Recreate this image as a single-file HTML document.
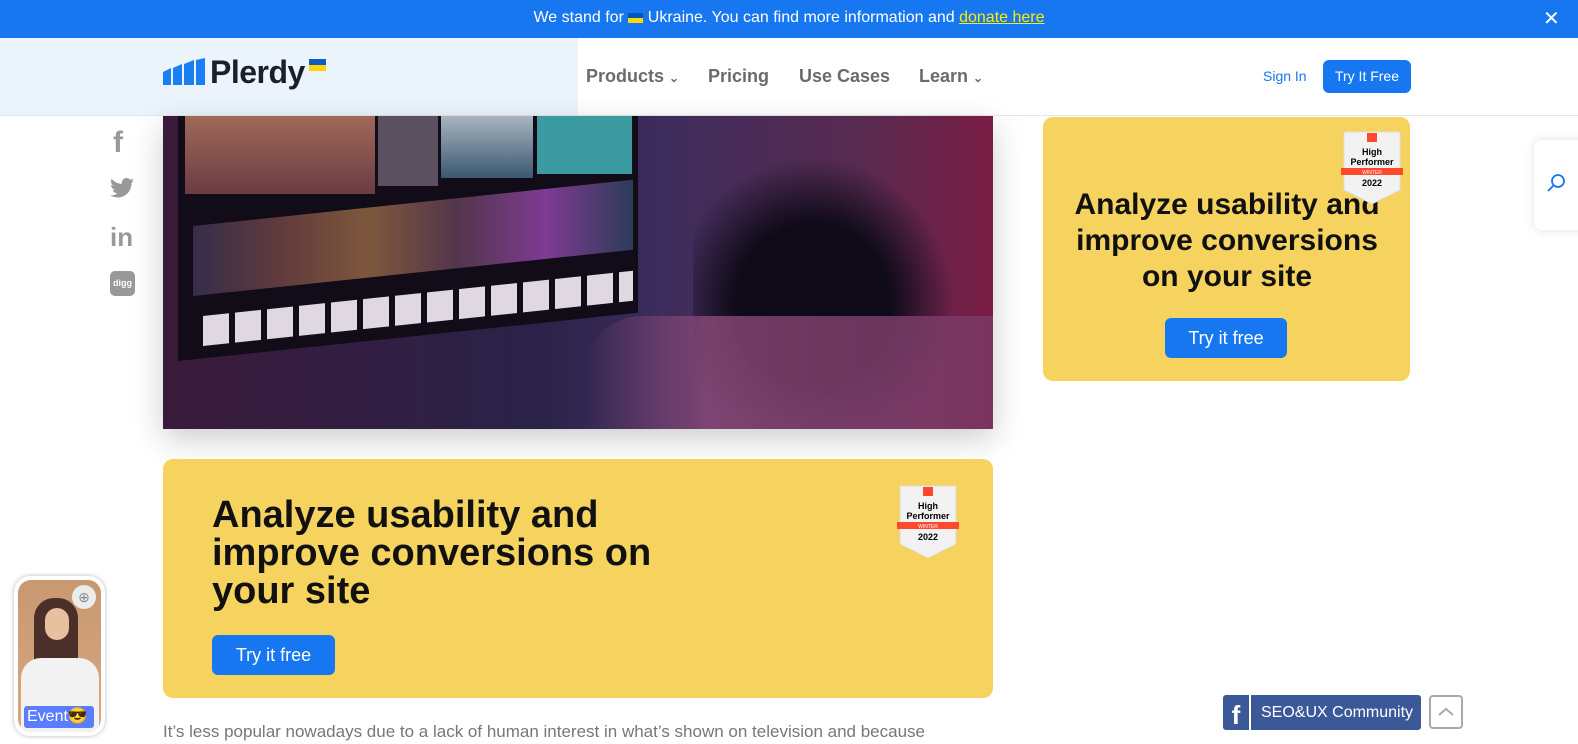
<!DOCTYPE html>
<html><head><meta charset="utf-8"><style>
*{margin:0;padding:0;box-sizing:border-box}
body{width:1578px;height:744px;overflow:hidden;background:#fff;font-family:"Liberation Sans",sans-serif;position:relative}
.top{position:absolute;left:0;top:0;width:1578px;height:38px;background:#1677f0;color:#fff;font-size:16px;text-align:center;line-height:36px}
.top a{color:#ffeb00;text-decoration:underline}
.hdr{position:absolute;top:38px;left:0;width:1578px;height:78px;background:#fff;border-bottom:1px solid #e6e6e6}
.hdrl{position:absolute;left:0;top:0;width:578px;height:77px;background:#ebf3fb}
.nav{position:absolute;top:28px;font-size:18px;font-weight:bold;color:#6b6b6b}
.abs{position:absolute}
.card{position:absolute;background:#f5d35e;border-radius:10px}
.btn{position:absolute;background:#1677f0;color:#fff;border-radius:6px;font-size:18px;text-align:center;line-height:40px}
h2{font-weight:bold;color:#111}
.badge{position:absolute;width:66px;height:76px}
</style></head><body>
<div class="top">We stand for <span style="display:inline-block;width:15px;height:10px;background:linear-gradient(#0057b7 50%,#ffd700 50%);vertical-align:-1px"></span> Ukraine. You can find more information and <a>donate here</a></div>
<div class="abs" style="left:1543px;top:10px;color:#fff;font-size:20px;line-height:18px">✕</div>
<div class="hdr"><div class="hdrl"></div>
<svg class="abs" style="left:163px;top:20px" width="42" height="28" viewBox="0 0 42 28"><path d="M0 14l8-4v17H0z M10 10l9-4v21h-9z M21 6l10-4v25H21z M33 2l9-2v27h-9z" fill="#1a7ef5"/></svg>
<div class="abs" style="left:210px;top:16px;font-size:32px;font-weight:bold;color:#1b1f2a;letter-spacing:-0.5px">Plerdy</div>
<div class="abs" style="left:309px;top:21px;width:17px;height:12px;background:linear-gradient(#0a5fc0 50%,#ffd500 50%)"></div>
<div class="nav" style="left:586px">Products <span style="font-size:12px">&#8964;</span></div>
<div class="nav" style="left:708px">Pricing</div>
<div class="nav" style="left:799px">Use Cases</div>
<div class="nav" style="left:919px">Learn <span style="font-size:12px">&#8964;</span></div>
<div class="abs" style="left:1263px;top:30px;font-size:14px;color:#1677f0">Sign In</div>
<div class="btn" style="left:1323px;top:22px;width:88px;height:33px;line-height:33px;font-size:14px">Try It Free</div>
</div>
<div class="abs" style="left:113px;top:128px;font-size:30px;font-weight:bold;color:#999;line-height:30px">f</div>
<svg class="abs" style="left:110px;top:178px" width="24" height="20" viewBox="0 0 24 20"><path d="M24 2.4a10 10 0 01-2.8.8A5 5 0 0023.3.4a10 10 0 01-3.1 1.2A4.9 4.9 0 0011.8 6 14 14 0 011.7.9a4.9 4.9 0 001.5 6.6 4.9 4.9 0 01-2.2-.6 4.9 4.9 0 003.9 4.9 5 5 0 01-2.2.1 4.9 4.9 0 004.6 3.4A9.9 9.9 0 010 17.3 14 14 0 007.5 19.5c9 0 14-7.5 14-14v-.6A10 10 0 0024 2.4z" fill="#999"/></svg>
<div class="abs" style="left:110px;top:222px;font-size:26px;font-weight:bold;color:#999">in</div>
<div class="abs" style="left:110px;top:271px;width:25px;height:25px;border-radius:5px;background:#999;color:#fff;font-size:9px;font-weight:bold;text-align:center;line-height:25px">digg</div>
<!-- hero image -->
<div class="abs" style="left:163px;top:116px;width:830px;height:313px;overflow:hidden;background:linear-gradient(90deg,#3a1a3a 0%,#2a2248 45%,#3d2c5c 60%,#5a2a50 85%,#7a1d44 100%);box-shadow:0 10px 30px rgba(0,0,0,.2)">
<div class="abs" style="left:15px;top:0;width:460px;height:245px;background:#120c18;transform:skewY(-6deg);transform-origin:0 0"></div>
<div class="abs" style="left:22px;top:0;width:190px;height:78px;background:linear-gradient(#a06858,#6a3c44)"></div>
<div class="abs" style="left:215px;top:0;width:60px;height:70px;background:#5a5060"></div>
<div class="abs" style="left:278px;top:0;width:92px;height:62px;background:linear-gradient(#aab4c0,#3a5870)"></div>
<div class="abs" style="left:374px;top:0;width:95px;height:58px;background:#3a9aa0"></div>
<div class="abs" style="left:30px;top:110px;width:440px;height:70px;background:linear-gradient(90deg,#3a3050,#6a4040,#8a6040,#5a3a50,#8a40a0,#304060);opacity:.9;transform:skewY(-6deg);transform-origin:0 0"></div>
<div class="abs" style="left:40px;top:200px;width:430px;height:30px;background:repeating-linear-gradient(90deg,#e0d8e0 0 26px,transparent 26px 32px);transform:skewY(-6deg);transform-origin:0 100%"></div>
<div class="abs" style="left:530px;top:0;width:300px;height:313px;background:radial-gradient(ellipse at 40% 60%,#0e0a18 0 30%,transparent 55%)"></div>
<div class="abs" style="left:420px;top:200px;width:410px;height:113px;background:linear-gradient(90deg,transparent,#8a4a78 30%,#7a3a66);border-radius:60px 0 0 0;opacity:.8"></div>
</div>
<!-- right card -->
<div class="card" style="left:1043px;top:117px;width:367px;height:264px">
<h2 style="position:absolute;left:24px;top:70px;width:320px;text-align:center;font-size:30px;line-height:36px">Analyze usability and improve conversions on your site</h2>
<div class="btn" style="left:122px;top:201px;width:122px">Try it free</div>
</div>
<svg class="badge" style="left:1339px;top:130px" viewBox="0 0 66 76"><path d="M5 2h56v58L33 74 5 60z" fill="#f2f2f2" stroke="#ddd"/><rect x="28" y="3" width="10" height="9" fill="#ff492c"/><text x="33" y="25" font-size="9" font-weight="bold" text-anchor="middle" font-family="Liberation Sans">High</text><text x="33" y="35" font-size="9" font-weight="bold" text-anchor="middle" font-family="Liberation Sans">Performer</text><rect x="2" y="38" width="62" height="7" fill="#ff492c"/><text x="33" y="44" font-size="5" fill="#fff" text-anchor="middle" font-family="Liberation Sans">WINTER</text><text x="33" y="56" font-size="9" font-weight="bold" text-anchor="middle" font-family="Liberation Sans">2022</text></svg>
<!-- search tab -->
<div class="abs" style="left:1534px;top:140px;width:60px;height:90px;background:#fff;border-radius:8px;box-shadow:0 0 10px rgba(0,0,0,.12)"></div>
<svg class="abs" style="left:1545px;top:172px" width="22" height="22" viewBox="0 0 22 22"><circle cx="13" cy="9" r="6" fill="none" stroke="#1677f0" stroke-width="1.8"/><path d="M9 13l-6 6" stroke="#1677f0" stroke-width="1.8"/></svg>
<!-- main card -->
<div class="card" style="left:163px;top:459px;width:830px;height:239px">
<h2 style="position:absolute;left:49px;top:37px;width:480px;font-size:38px;line-height:38px">Analyze usability and improve conversions on your site</h2>
<div class="btn" style="left:49px;top:176px;width:123px">Try it free</div>
</div>
<svg class="badge" style="left:895px;top:484px" viewBox="0 0 66 76"><path d="M5 2h56v58L33 74 5 60z" fill="#f2f2f2" stroke="#ddd"/><rect x="28" y="3" width="10" height="9" fill="#ff492c"/><text x="33" y="25" font-size="9" font-weight="bold" text-anchor="middle" font-family="Liberation Sans">High</text><text x="33" y="35" font-size="9" font-weight="bold" text-anchor="middle" font-family="Liberation Sans">Performer</text><rect x="2" y="38" width="62" height="7" fill="#ff492c"/><text x="33" y="44" font-size="5" fill="#fff" text-anchor="middle" font-family="Liberation Sans">WINTER</text><text x="33" y="56" font-size="9" font-weight="bold" text-anchor="middle" font-family="Liberation Sans">2022</text></svg>
<div class="abs" style="left:163px;top:722px;font-size:17px;color:#777;white-space:nowrap">It’s less popular nowadays due to a lack of human interest in what’s shown on television and because</div>
<!-- video widget -->
<div class="abs" style="left:14px;top:576px;width:91px;height:160px;border-radius:16px;background:#fff;box-shadow:0 0 4px rgba(0,0,0,.3)"></div>
<div class="abs" style="left:18px;top:580px;width:83px;height:152px;border-radius:13px;overflow:hidden;background:linear-gradient(#c89870,#d8a882)">
<div class="abs" style="left:16px;top:18px;width:44px;height:70px;border-radius:20px 20px 0 0;background:#4a3028"></div>
<div class="abs" style="left:27px;top:28px;width:24px;height:32px;border-radius:12px;background:#e8c0a0"></div>
<div class="abs" style="left:3px;top:78px;width:78px;height:80px;border-radius:20px 20px 0 0;background:#f2f2f2"></div>
<div class="abs" style="left:54px;top:5px;width:24px;height:24px;border-radius:12px;background:#ececec;color:#888;font-size:14px;text-align:center;line-height:24px">⊕</div>
</div>
<div class="abs" style="left:24px;top:706px;width:70px;height:22px;background:#5a7cff;border-radius:3px;color:#fff;font-size:16px;line-height:22px;padding-left:3px">Event😎</div>
<!-- community -->
<div class="abs" style="left:1223px;top:695px;width:26px;height:35px;background:#3b5998;border-radius:3px 0 0 3px;color:#fff;font-weight:bold;font-size:26px;text-align:center;line-height:40px">f</div>
<div class="abs" style="left:1251px;top:695px;width:170px;height:35px;background:#3b5998;border-radius:0 3px 3px 0;color:#fff;font-size:16px;line-height:35px;padding-left:10px">SEO&amp;UX Community</div>
<div class="abs" style="left:1429px;top:695px;width:34px;height:34px;border:2px solid #aaa;border-radius:4px"></div>
<svg class="abs" style="left:1437px;top:706px" width="18" height="10"><path d="M2 9l7-6 7 6" fill="none" stroke="#aaa" stroke-width="2"/></svg>
</body></html>
